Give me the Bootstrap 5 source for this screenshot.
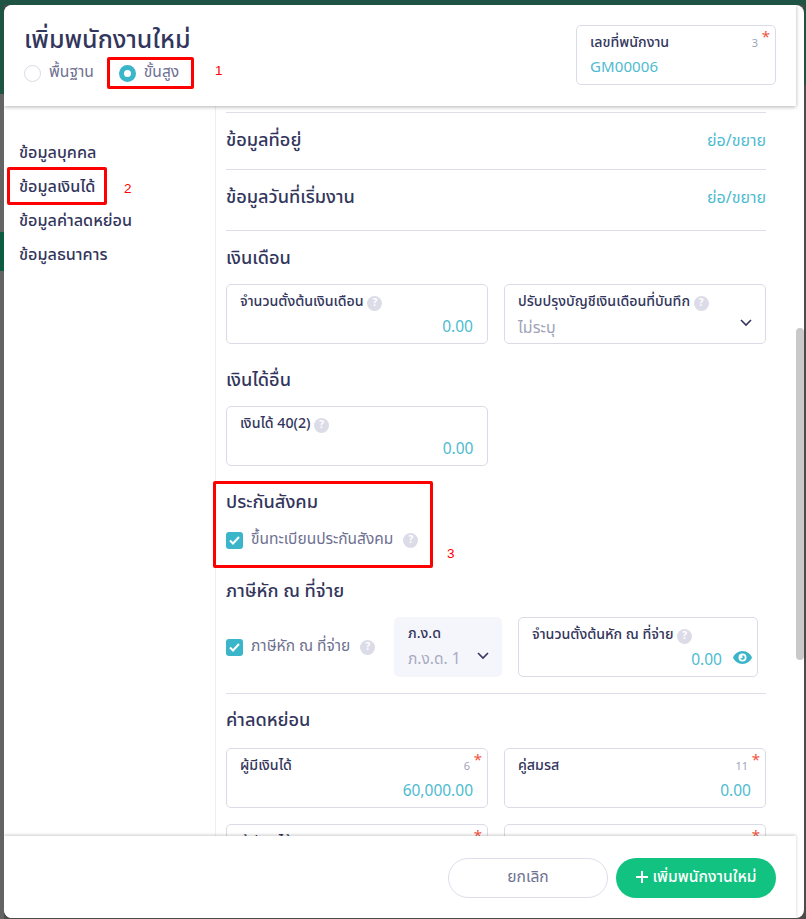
<!DOCTYPE html>
<html lang="th"><head><meta charset="utf-8">
<link href="https://cdn.jsdelivr.net/npm/bootstrap@5.3.0/dist/css/bootstrap.min.css" rel="stylesheet">
<style>
html,body{height:100%;margin:0;overflow:hidden}
body{font-family:"Noto Sans Thai","Noto Sans",Inter,sans-serif;color:#33365c;font-size:15.6px;background:#4b4b4b;position:relative}
.bg-left{position:absolute;left:0;top:0;width:4px;height:919px;background:linear-gradient(#1f5444 0 94px,#646464 94px 232px,#0d5c3f 232px 271px,#636363 271px)}
.bg-right{position:absolute;right:0;top:0;width:2px;height:919px;background:linear-gradient(#1f5444 0 85px,#4b4b4b 85px)}
.bg-top{position:absolute;left:0;top:0;width:806px;height:5px;background:#1f5444}
.sheet{position:absolute;left:4px;top:5px;width:800px;height:913px;background:#fff;border-radius:8px;overflow:hidden;display:flex;flex-direction:column;padding-right:8px}
.sheet-head{height:101px;flex:none;padding:19px 20px 0 20px;box-shadow:0 1px 4px rgba(0,0,0,.3);position:relative;z-index:2;background:#fff}
.sheet-title{font-size:25px;font-weight:500;line-height:32px;margin:0}
.radio-row{margin-top:5px;height:24px}
.radio-txt{font-size:15.6px;color:#6e7191}
.radio-off,.radio-on{width:17px;height:17px;border-radius:50%;display:inline-block;flex:none}
.radio-off{border:1px solid #d9d9e6;margin-right:8px}
.radio-on{border:5px solid #3ab5c9;background:#fff;margin-left:25px;margin-right:8px}
.mid{flex:1;min-height:0;overflow:hidden}
.side{width:212px;flex:none;border-right:1px solid #eeeef4;padding:30px 0 0 15px}
.side-item{font-size:16.2px;font-weight:500;height:34px;line-height:34px}
.main{flex:1;padding:6px 30px 0 10px}
.sec-line{border-top:1px solid #dedeea}
.h-a{height:57px}.h-b{height:61px;padding-bottom:5px}.h-c{height:54px;padding-top:3px}
.h-d{height:62px;padding-top:11px}.h-e{height:62px;padding-top:12px}.h-f{height:65px;padding-top:15px}.h-g{height:54px}
.sec-h{font-size:18.2px;font-weight:500;margin:0;line-height:26px}
.teal{color:#4dbbd0;font-size:16px}
.fld{border:1px solid #dbdbe8;border-radius:5px;height:60px;padding:7px 14px 0 13px;position:relative;background:#fff}
.fld-id{width:200px;margin-top:1px}
.fld-lab{font-size:14.2px;font-weight:500;line-height:20px}
.fld-val{font-size:15.5px;color:#4dbbd0;line-height:22px;text-align:right;margin-top:5px}
.fld-muted{color:#a0a3b8;text-align:left;font-size:16px}
.fld-left{text-align:left;font-size:15px;letter-spacing:.1px;line-height:20px}
.hint{width:15px;height:15px;border-radius:50%;background:#dcdce8;color:#fff;font-size:10px;line-height:15px;text-align:center;display:inline-block;font-weight:700;flex:none}
.hint-a{margin-left:10px}
.num{position:absolute;right:17px;top:11px;font-size:11px;color:#a0a3b8;line-height:14px}
.req{position:absolute;right:5px;top:3px;font-size:15px;color:#f0553d;line-height:18px}
.chk{width:17px;height:17px;border-radius:3px;background:#3ab5c9;display:inline-flex;align-items:center;justify-content:center;flex:none;margin-right:8px}
.chk-txt{font-size:15.5px;color:#6e7191}
.chk-row{height:24px}
.tax-lab{width:168px;flex:none}
.sel-box{background:#f5f6fb;border-radius:5px;width:108px;height:60px;padding:7px 14px 0;position:relative;flex:none;margin-right:16px}
.fld-w{width:240px;flex:none}
.val-pad{padding-right:21px}
.sel-val{color:#a8abc0;text-align:left}
.chev{position:absolute}
.chev-a{right:13px;top:34px}
.chev-b{right:13px;top:35px}
.eye{position:absolute;right:5px;top:33px}
.rule{border-top:1px solid #dedeea;margin-top:16px}
.rule-spacer{margin-top:16px}
.sheet-foot{height:82px;flex:none;padding:22px 20px 0 0;box-shadow:0 -1px 3px rgba(0,0,0,.2);position:relative;z-index:2;background:#fff}
.btn-c,.btn-c:hover{width:160px;height:40px;border:1px solid #dedeea;border-radius:20px;background:#fff;color:#6e7191;font-size:15.6px;padding:0}
.btn-a,.btn-a:hover{width:160px;height:40px;border:0;border-radius:20px;background:#12c281;color:#fff;font-size:15.6px;font-weight:500;padding:0}
.btn-a svg{margin-right:5px;vertical-align:-1px}
.mk{position:absolute;border:3px solid #f00;border-radius:2px;z-index:5}
.mk-1{left:107px;top:57px;width:87px;height:32px}
.mk-2{left:7px;top:167px;width:100px;height:38px}
.mk-3{left:213px;top:481px;width:220px;height:87px}
.mk-n{position:absolute;color:#f00;font-size:13.5px;z-index:5;line-height:16px;font-family:"Liberation Sans",sans-serif}
.n-1{left:215px;top:63px}.n-2{left:124px;top:181px}.n-3{left:447px;top:546px}
.thumb{position:absolute;left:796px;top:328px;width:8px;height:332px;background:#c9c9c9;border-radius:4px;z-index:6}
</style></head><body>
<div class="bg-top"></div><div class="bg-left"></div><div class="bg-right"></div>
<div class="sheet">
  <div class="sheet-head d-flex justify-content-between">
    <div>
      <h1 class="sheet-title">เพิ่มพนักงานใหม่</h1>
      <div class="d-flex align-items-center radio-row">
        <span class="radio-off"></span><span class="radio-txt">พื้นฐาน</span>
        <span class="radio-on"></span><span class="radio-txt">ขั้นสูง</span>
      </div>
    </div>
    <div class="fld fld-id">
      <div class="fld-lab">เลขที่พนักงาน</div>
      <div class="fld-val fld-left">GM00006</div>
      <span class="num">3</span><span class="req">*</span>
    </div>
  </div>
  <div class="mid d-flex">
    <div class="side">
      <div class="side-item">ข้อมูลบุคคล</div>
      <div class="side-item">ข้อมูลเงินได้</div>
      <div class="side-item">ข้อมูลค่าลดหย่อน</div>
      <div class="side-item">ข้อมูลธนาคาร</div>
    </div>
    <div class="main">
      <div class="sec-line d-flex justify-content-between align-items-center h-a"><h2 class="sec-h">ข้อมูลที่อยู่</h2><span class="teal">ย่อ/ขยาย</span></div>
      <div class="sec-line d-flex justify-content-between align-items-center h-b"><h2 class="sec-h">ข้อมูลวันที่เริ่มงาน</h2><span class="teal">ย่อ/ขยาย</span></div>
      <div class="sec-line d-flex align-items-center h-c"><h2 class="sec-h">เงินเดือน</h2></div>
      <div class="d-flex gap-3">
        <div class="fld w-50"><div class="fld-lab">จำนวนตั้งต้นเงินเดือน <span class="hint">?</span></div><div class="fld-val">0.00</div></div>
        <div class="fld w-50"><div class="fld-lab">ปรับปรุงบัญชีเงินเดือนที่บันทึก <span class="hint">?</span></div><div class="fld-val fld-muted">ไม่ระบุ</div>
          <svg class="chev chev-a" width="12" height="8" viewBox="0 0 12 8"><path d="M1 1l5 5 5-5" fill="none" stroke="#33365c" stroke-width="1.6"/></svg></div>
      </div>
      <div class="d-flex align-items-center h-d"><h2 class="sec-h">เงินได้อื่น</h2></div>
      <div class="d-flex gap-3">
        <div class="fld w-50"><div class="fld-lab">เงินได้ 40(2) <span class="hint">?</span></div><div class="fld-val">0.00</div></div>
        <div class="w-50"></div>
      </div>
      <div class="d-flex align-items-center h-e"><h2 class="sec-h">ประกันสังคม</h2></div>
      <div class="d-flex align-items-center chk-row"><span class="chk"><svg width="11" height="9" viewBox="0 0 11 9"><path d="M1 4.5l3 3 6-6.5" fill="none" stroke="#fff" stroke-width="2"/></svg></span><span class="chk-txt">ขึ้นทะเบียนประกันสังคม</span><span class="hint hint-a">?</span></div>
      <div class="d-flex align-items-center h-f"><h2 class="sec-h">ภาษีหัก ณ ที่จ่าย</h2></div>
      <div class="d-flex align-items-center">
        <div class="tax-lab d-flex align-items-center"><span class="chk"><svg width="11" height="9" viewBox="0 0 11 9"><path d="M1 4.5l3 3 6-6.5" fill="none" stroke="#fff" stroke-width="2"/></svg></span><span class="chk-txt">ภาษีหัก ณ ที่จ่าย</span><span class="hint hint-a">?</span></div>
        <div class="sel-box"><div class="fld-lab">ภ.ง.ด</div><div class="fld-val sel-val">ภ.ง.ด. 1</div>
          <svg class="chev chev-b" width="12" height="8" viewBox="0 0 12 8"><path d="M1 1l5 5 5-5" fill="none" stroke="#33365c" stroke-width="1.6"/></svg></div>
        <div class="fld fld-w"><div class="fld-lab">จำนวนตั้งต้นหัก ณ ที่จ่าย <span class="hint">?</span></div><div class="fld-val val-pad">0.00</div>
          <svg class="eye" width="19" height="13" viewBox="0 0 19 13"><path fill-rule="evenodd" fill="#3ab5c9" d="M9.5 0C14 0 17.6 3 19 6.5 17.6 10 14 13 9.5 13S1.400 10 0 6.500C1.400 3 5 0 9.500 0zm0 2.500a4 4 0 1 0 0 8 4 4 0 0 0 0-8z"/><path fill="#3ab5c9" d="M9.500 4.200a2.300 2.300 0 1 1-2.200 3h2.200z"/></svg></div>
      </div>
      <div class="rule"></div>
      <div class="d-flex align-items-center h-g"><h2 class="sec-h">ค่าลดหย่อน</h2></div>
      <div class="d-flex gap-3">
        <div class="fld w-50"><div class="fld-lab">ผู้มีเงินได้</div><div class="fld-val">60,000.00</div><span class="num">6</span><span class="req">*</span></div>
        <div class="fld w-50"><div class="fld-lab">คู่สมรส</div><div class="fld-val">0.00</div><span class="num">11</span><span class="req">*</span></div>
      </div>
      <div class="d-flex gap-3 rule-spacer">
        <div class="fld w-50"><div class="fld-lab">ผู้มีเงินได้</div><span class="req">*</span></div>
        <div class="fld w-50"><span class="req">*</span></div>
      </div>
    </div>
  </div>
  <div class="sheet-foot d-flex justify-content-end gap-2">
    <button class="btn btn-c">ยกเลิก</button>
    <button class="btn btn-a"><svg width="12" height="12" viewBox="0 0 12 12"><path d="M6 0v12M0 6h12" stroke="#fff" stroke-width="2"/></svg>เพิ่มพนักงานใหม่</button>
  </div>
</div>
<div class="thumb"></div>
<div class="mk mk-1"></div><div class="mk-n n-1">1</div>
<div class="mk mk-2"></div><div class="mk-n n-2">2</div>
<div class="mk mk-3"></div><div class="mk-n n-3">3</div>
</body></html>
